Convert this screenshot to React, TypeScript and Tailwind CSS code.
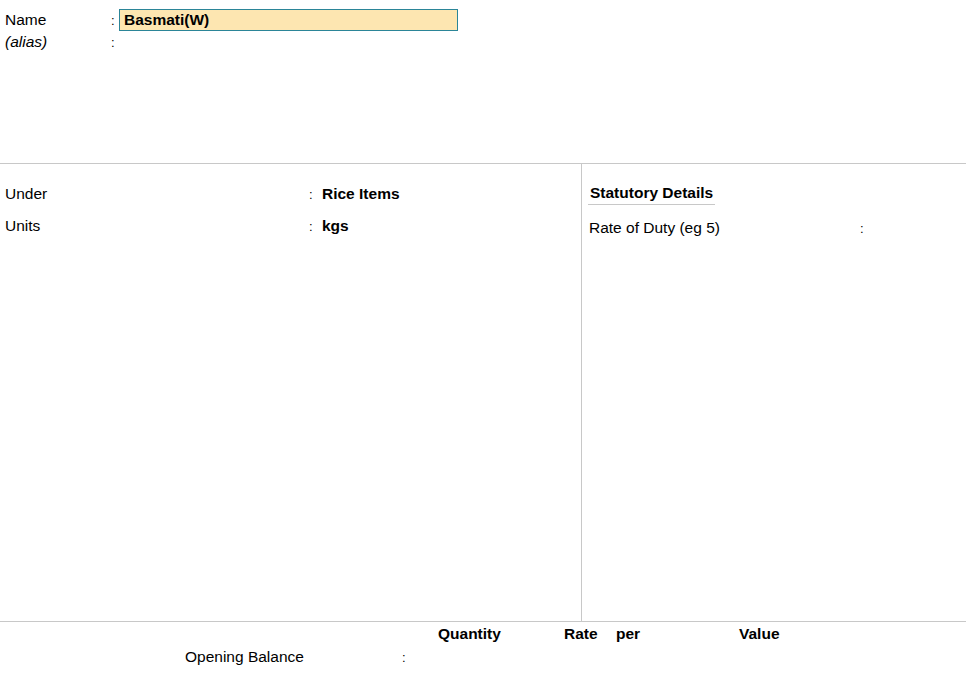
import React from 'react';

function Colon() {
  return <span className="w-[4px] text-[13px] leading-none">:</span>;
}

export default function App() {
  return (
    <div className="w-[966px] h-[684px] bg-white text-black text-[15.5px] font-['Liberation_Sans',Arial,sans-serif] flex flex-col overflow-hidden">
      {/* top: name / alias */}
      <section className="h-[164px] border-b border-[#c8c8c8] pt-[9px]">
        <div className="flex items-center h-[22px]">
          <span className="w-[111px] pl-[5px]">Name</span>
          <Colon />
          <div className="ml-[4px] w-[339px] h-[22px] bg-[#fde6b1] border border-[#2b8598] pl-[4px] flex items-center font-bold">
            Basmati(W)
          </div>
        </div>
        <div className="flex items-center h-[22px]">
          <span className="w-[111px] pl-[5px] italic">(alias)</span>
          <Colon />
        </div>
      </section>

      {/* middle panels */}
      <section className="h-[458px] flex border-b border-[#c8c8c8]">
        <div className="w-[582px] border-r border-[#c8c8c8] pt-[21px]">
          <div className="flex items-center h-[18px]">
            <span className="w-[309px] pl-[5px]">Under</span>
            <Colon />
            <span className="ml-[9px] font-bold">Rice Items</span>
          </div>
          <div className="flex items-center h-[18px] mt-[14px]">
            <span className="w-[309px] pl-[5px]">Units</span>
            <Colon />
            <span className="ml-[9px] font-bold">kgs</span>
          </div>
        </div>
        <div className="flex-1 pt-[17px] pl-[6px]">
          <div className="inline-block px-[2px] pb-[2px] border-b border-[#c8c8c8] font-bold leading-[18px]">
            Statutory Details
          </div>
          <div className="flex items-center h-[18px] mt-[14px] pl-[1px]">
            <span className="w-[271px]">Rate of Duty (eg 5)</span>
            <Colon />
          </div>
        </div>
      </section>

      {/* bottom: opening balance */}
      <section className="flex-1">
        <div className="flex items-center h-[22px] mt-[1px] font-bold">
          <span className="w-[126px] ml-[438px]">Quantity</span>
          <span className="w-[52px]">Rate</span>
          <span className="w-[123px]">per</span>
          <span>Value</span>
        </div>
        <div className="flex items-center h-[22px] mt-[1px]">
          <span className="w-[217px] ml-[185px] whitespace-nowrap">Opening Balance</span>
          <Colon />
        </div>
      </section>
    </div>
  );
}
